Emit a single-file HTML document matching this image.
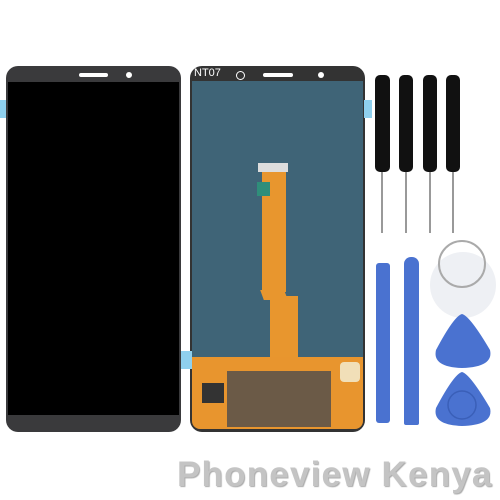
<!DOCTYPE html>
<html><head><style>
body{margin:0;width:500px;height:500px;background:#fff;position:relative;overflow:hidden;font-family:"Liberation Sans",sans-serif}
.a{position:absolute}
</style></head><body>
<div class="a" style="left:6px;top:66px;width:175px;height:366px;background:#3a3a3c;border-radius:12px"></div>
<div class="a" style="left:8px;top:82px;width:171px;height:333px;background:#000"></div>
<div class="a" style="left:79px;top:73px;width:29px;height:4px;background:#fff;border-radius:2px"></div>
<div class="a" style="left:126px;top:72px;width:6px;height:6px;background:#fff;border-radius:50%"></div>
<div class="a" style="left:0;top:100px;width:6px;height:18px;background:#8fd0ee"></div>
<div class="a" style="left:181px;top:351px;width:8px;height:18px;background:#8fd0ee"></div>
<div class="a" style="left:190px;top:66px;width:175px;height:366px;background:#333;border-radius:12px"></div>
<div class="a" style="left:192px;top:81px;width:171px;height:280px;background:#3f6477"></div>
<div class="a" style="left:364px;top:100px;width:8px;height:18px;background:#8fd0ee"></div>
<div class="a" style="left:194px;top:67px;color:#fff;font-size:11px">NT07</div>
<div class="a" style="left:236px;top:71px;width:7px;height:7px;border:1.5px solid #fff;border-radius:50%"></div>
<div class="a" style="left:263px;top:73px;width:30px;height:4px;background:#fff;border-radius:2px"></div>
<div class="a" style="left:318px;top:72px;width:6px;height:6px;background:#fff;border-radius:50%"></div>
<div class="a" style="left:258px;top:163px;width:30px;height:9px;background:#ddd"></div>
<div class="a" style="left:262px;top:172px;width:24px;height:120px;background:#e8962e"></div>
<div class="a" style="left:262px;top:290px;width:24px;height:10px;background:#e8962e;transform:skewX(20deg)"></div>
<div class="a" style="left:270px;top:296px;width:28px;height:62px;background:#e8962e"></div>
<div class="a" style="left:257px;top:182px;width:13px;height:14px;background:#2f8e7a"></div>
<div class="a" style="left:192px;top:357px;width:171px;height:72px;background:#e8952e;border-radius:0 0 8px 8px"></div>
<div class="a" style="left:227px;top:371px;width:104px;height:56px;background:#6b5a47"></div>
<div class="a" style="left:202px;top:383px;width:22px;height:20px;background:#333"></div>
<div class="a" style="left:340px;top:362px;width:20px;height:20px;background:#f1dfb8;border-radius:4px"></div>
<div class="a" style="left:182px;top:351px;width:10px;height:18px;background:#8fd0ee"></div>
<div class="a" style="left:375px;top:75px;width:15px;height:97px;background:#111;border-radius:5px"></div>
<div class="a" style="left:399px;top:75px;width:14px;height:97px;background:#111;border-radius:5px"></div>
<div class="a" style="left:423px;top:75px;width:14px;height:97px;background:#111;border-radius:5px"></div>
<div class="a" style="left:446px;top:75px;width:14px;height:97px;background:#111;border-radius:5px"></div>
<div class="a" style="left:381px;top:172px;width:2px;height:61px;background:#999"></div>
<div class="a" style="left:405px;top:172px;width:2px;height:61px;background:#999"></div>
<div class="a" style="left:429px;top:172px;width:2px;height:61px;background:#999"></div>
<div class="a" style="left:452px;top:172px;width:2px;height:61px;background:#999"></div>
<div class="a" style="left:376px;top:263px;width:14px;height:160px;background:#4a72d0;border-radius:3px"></div>
<div class="a" style="left:404px;top:257px;width:15px;height:168px;background:#4a72d0;border-radius:7px 7px 2px 2px"></div>
<div class="a" style="left:430px;top:252px;width:66px;height:66px;background:#eef0f4;border-radius:50%"></div>
<div class="a" style="left:438px;top:240px;width:44px;height:44px;border:2px solid #aaa;border-radius:50%"></div>
<svg class="a" style="left:0;top:0" width="500" height="500">
<path d="M462 314 Q470 316 490 350 Q494 367 462 368 Q432 367 436 350 Q454 316 462 314Z" fill="#4a72d0"/>
<path d="M462 372 Q470 374 490 408 Q494 425 462 426 Q432 425 436 408 Q454 374 462 372Z" fill="#4a72d0"/>
<circle cx="462" cy="405" r="14" fill="none" stroke="#3a5fb8" stroke-width="1.5"/>
</svg>
<div class="a" style="left:177px;top:455px;font-size:35px;font-weight:bold;letter-spacing:1.2px;color:#c4c4c4;text-shadow:1px 1px 1px #aaa;white-space:nowrap">Phoneview Kenya</div>
</body></html>
